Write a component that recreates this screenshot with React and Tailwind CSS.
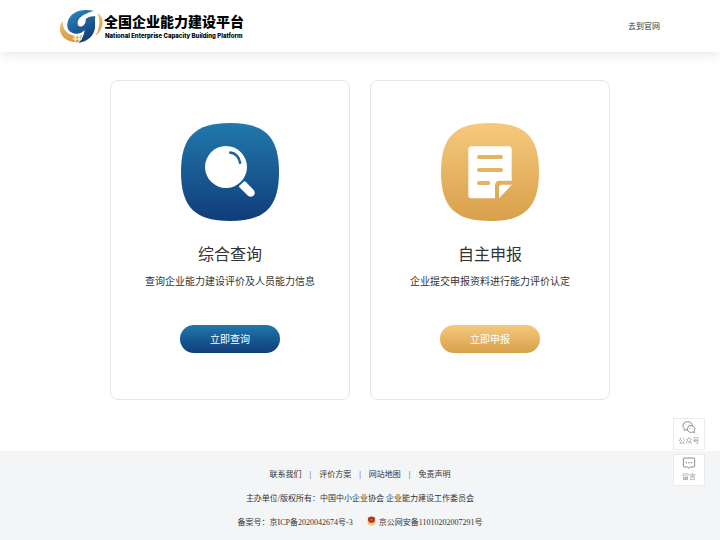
const sans = "font-['Liberation_Sans','Noto_Sans_CJK_SC',sans-serif]";
const serif = "font-['Liberation_Serif','Noto_Sans_CJK_SC',serif]";

function LogoMark() {
  return (
    <svg viewBox="0 0 156 126" className="h-[42px] w-[52px] shrink-0" aria-hidden="true">
      <defs>
        <linearGradient id="logoBlue" x1="0" y1="0" x2="0.5" y2="1">
          <stop offset="0" stopColor="#2e8cc4" />
          <stop offset="1" stopColor="#123f78" />
        </linearGradient>
        <linearGradient id="logoGold" x1="0" y1="0" x2="0" y2="1">
          <stop offset="0" stopColor="#e9c078" />
          <stop offset="1" stopColor="#d39a3c" />
        </linearGradient>
      </defs>
      <path d="M20 44C7 60 10 88 30 100C44 109 60 110 72 108L78 86C64 92 44 90 32 78C23 69 19 58 20 44Z" fill="url(#logoGold)" />
      <path d="M124 20C147 36 146 66 118 90C131 68 134 43 124 20Z" fill="url(#logoGold)" />
      <path
        d="M114 15C74 6 42 20 35 48C29 70 44 85 64 83C74 82 81 78 86 72C84 88 78 100 68 111C97 106 115 88 117 64C118 50 116 40 118 31C107 29 96 32 89 39C90 48 86 58 78 61C69 64 63 57 65 48C68 34 86 21 114 15Z"
        fill="url(#logoBlue)"
      />
      <path d="M52 90h24M50 99h28M58 85v22M69 85v22" stroke="#fff" strokeWidth="3" />
    </svg>
  );
}

function SearchTile() {
  return (
    <svg viewBox="0 0 300 300" className="size-[100px]" aria-hidden="true">
      <defs>
        <linearGradient id="tileBlue" x1="0" y1="0" x2="0" y2="1">
          <stop offset="0" stopColor="#2278ac" />
          <stop offset="1" stopColor="#103d79" />
        </linearGradient>
      </defs>
      <path d="M150 3C255 3 297 45 297 150S255 297 150 297S3 255 3 150S45 3 150 3Z" fill="url(#tileBlue)" />
      <circle cx="138" cy="135" r="63" fill="#fff" />
      <path d="M151 92C167 93 178 106 180 122" fill="none" stroke="#1d6599" strokeWidth="8" strokeLinecap="round" />
      <path d="M178 191L191 179Q194 176 197 179L222 205Q227 213 222 220Q213 228 204 221L178 196Q175 193 178 191Z" fill="#fff" />
    </svg>
  );
}

function FormTile() {
  return (
    <svg viewBox="0 0 300 300" className="size-[100px]" aria-hidden="true">
      <defs>
        <linearGradient id="tileGold" x1="0" y1="0" x2="0" y2="1">
          <stop offset="0" stopColor="#f5c97c" />
          <stop offset="1" stopColor="#d8a04b" />
        </linearGradient>
      </defs>
      <path d="M150 3C255 3 297 45 297 150S255 297 150 297S3 255 3 150S45 3 150 3Z" fill="url(#tileGold)" />
      <path d="M95 73H205Q215 73 215 83V176H179Q165 176 165 190V229H95Q85 229 85 219V83Q85 73 95 73Z" fill="#fff" />
      <path d="M117 105H183M117 144H183M117 183H145" stroke="#e5b462" strokeWidth="12" strokeLinecap="round" />
      <path d="M216 188H184Q177 188 177 195V229Z" fill="#fff" />
    </svg>
  );
}

function WechatIcon() {
  return (
    <svg viewBox="0 0 42 42" className="size-[14px]" fill="none" stroke="#8a8a8a" strokeWidth="3" aria-hidden="true">
      <path d="M18 30C15 31 13 30 11 29L6 31L7 26C-2 17 5 5 17 5C26 5 31 11 31 17" />
      <path d="M27 17C17 17 13 27 18 33C22 38 28 38 32 36L37 38L36 33C42 26 37 17 27 17Z" />
      <path d="M12 14v2M21 14v2M23 25v2M31 25v2" strokeWidth="3" />
    </svg>
  );
}

function MessageIcon() {
  return (
    <svg viewBox="0 0 42 42" className="size-[14px]" fill="none" stroke="#8a8a8a" strokeWidth="3" strokeLinejoin="round" aria-hidden="true">
      <path d="M7 6H35Q38 6 38 9V30Q38 33 35 33H25L21 37L17 33H7Q4 33 4 30V9Q4 6 7 6Z" />
      <path d="M11 20h4M19 20h4M27 20h4" strokeWidth="4" />
    </svg>
  );
}

function PoliceBadge() {
  return (
    <svg viewBox="0 0 30 32" className="mb-1 h-[10px] w-[9px]" aria-hidden="true">
      <path d="M3 12C-1 23 6 31 15 31S31 23 27 12L21 20H9Z" fill="#e9bb62" />
      <path d="M15 0L21 3L27 4L27 14Q24 21 15 23Q6 21 3 14L3 4L9 3Z" fill="#d03524" />
      <circle cx="15" cy="12" r="7" fill="#7d2a26" />
      <path d="M15 6l1 4h5l-4 3 2 4-4-3-4 3 2-4-4-3h5Z" fill="#e0913a" />
      <path d="M9 24Q15 28 21 24" fill="none" stroke="#fff0b4" strokeWidth="2" />
    </svg>
  );
}

const cards = [
  {
    title: "综合查询",
    text: "查询企业能力建设评价及人员能力信息",
    action: "立即查询",
    Icon: SearchTile,
    fill: "from-[#2278ac] to-[#103d79]",
  },
  {
    title: "自主申报",
    text: "企业提交申报资料进行能力评价认定",
    action: "立即申报",
    Icon: FormTile,
    fill: "from-[#f5c97c] to-[#d8a04b]",
  },
];

const footerLinks = ["联系我们", "评价方案", "网站地图", "免责声明"];

const sideActions = [
  { label: "公众号", Icon: WechatIcon },
  { label: "留言", Icon: MessageIcon },
];

export default function App() {
  return (
    <div className={`flex min-h-screen flex-col bg-white text-[#333] ${sans}`}>
      <header className="flex h-[52px] items-center justify-between px-[60px] pt-px shadow-[0_2px_12px_rgba(0,0,0,0.1)]">
        <a href="#home" className="-ml-1 flex items-center text-black">
          <LogoMark />
          <span className="-ml-1 flex flex-col">
            <span className="text-[14px] leading-[18px] font-black whitespace-nowrap">全国企业能力建设平台</span>
            <span className="pl-px font-['Inter',sans-serif] text-[6px] leading-[10px] font-extrabold whitespace-nowrap">
              National Enterprise Capacity Building Platform
            </span>
          </span>
        </a>
        <a href="#official" className="text-[8px] leading-4">去到官网</a>
      </header>

      <main className="flex flex-wrap justify-center gap-5 px-5 pt-7 pb-[51px]">
        {cards.map(({ title, text, action, Icon, fill }) => (
          <section key={title} className="flex w-60 flex-col items-center rounded-lg border border-[#e6e6e6] pt-[41px] pb-[46px]">
            <Icon />
            <h2 className="mt-[21px] text-[16px] leading-6">{title}</h2>
            <p className="mt-[7px] text-[10px] leading-4">{text}</p>
            <button type="button" className={`mt-[35px] h-7 w-[100px] rounded-full bg-linear-to-b text-[10px] text-white ${fill}`}>
              {action}
            </button>
          </section>
        ))}
      </main>

      <footer className={`flex grow flex-col bg-[#f4f5f7] pt-3 pb-1 text-center text-[8px] leading-6 ${serif}`}>
        <nav className="flex justify-center gap-2">
          {footerLinks.map((label, i) => (
            <span key={label} className="flex gap-2">
              {i > 0 && <span>|</span>}
              <a href="#info">{label}</a>
            </span>
          ))}
        </nav>
        <p>主办单位/版权所有：中国中小企业协会 企业能力建设工作委员会</p>
        <p className="flex items-center justify-center gap-[14px]">
          <a href="#icp">备案号：京ICP备2020042674号-3</a>
          <a href="#police" className="flex items-center gap-[3px]">
            <PoliceBadge />
            京公网安备11010202007291号
          </a>
        </p>
      </footer>

      <aside className="fixed right-[15px] bottom-[54px] flex flex-col gap-1">
        {sideActions.map(({ label, Icon }) => (
          <button
            key={label}
            type="button"
            className="flex size-8 flex-col items-center justify-center gap-0.5 border border-[#e9eaec] bg-white pb-0.5 text-[7px] leading-[10px] text-[#999]"
          >
            <Icon />
            {label}
          </button>
        ))}
      </aside>
    </div>
  );
}
